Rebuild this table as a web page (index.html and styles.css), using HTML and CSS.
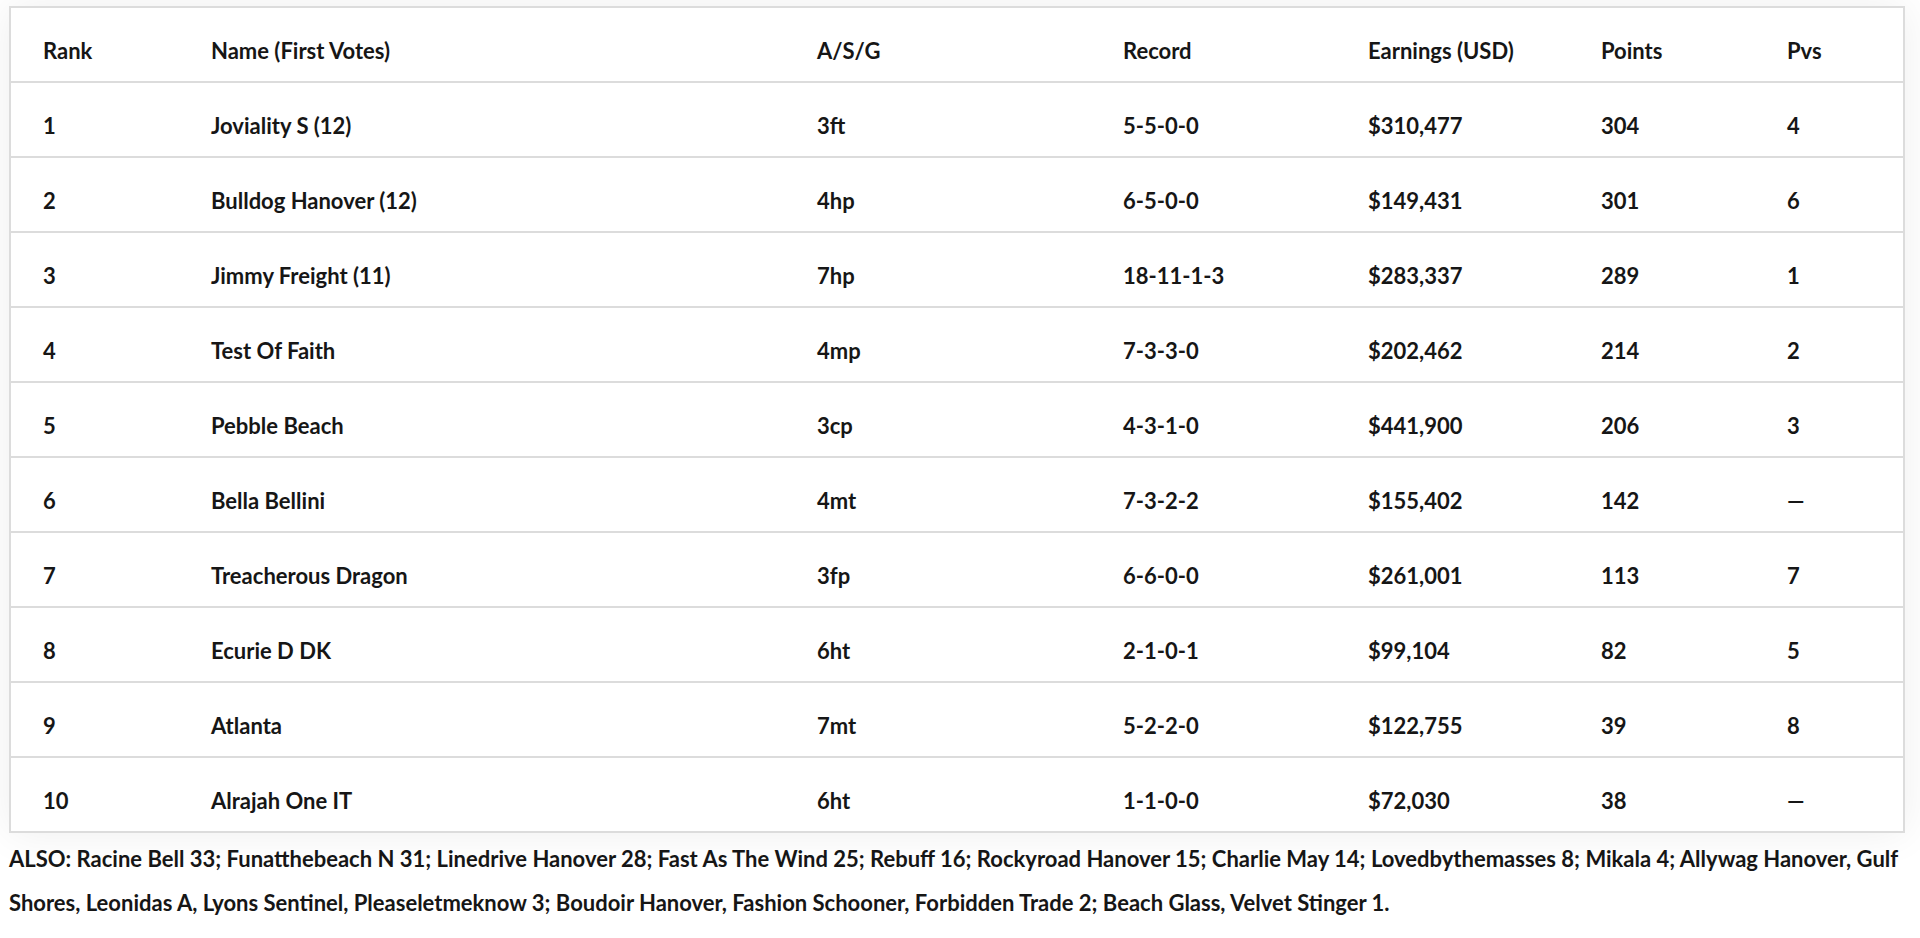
FILE: index.html
```html
<!DOCTYPE html>
<html lang="en">
<head>
<meta charset="utf-8">
<title>Poll</title>
<link rel="stylesheet" href="styles.css">
</head>
<body>
<div class="page">
  <table class="poll">
    <colgroup>
      <col class="c-rank"><col class="c-name"><col class="c-asg"><col class="c-rec"><col class="c-earn"><col class="c-pts"><col class="c-pvs">
    </colgroup>
    <thead>
      <tr><th>Rank</th><th>Name (First Votes)</th><th>A/S/G</th><th>Record</th><th>Earnings (USD)</th><th>Points</th><th>Pvs</th></tr>
    </thead>
    <tbody>
      <tr><td>1</td><td>Joviality S (12)</td><td>3ft</td><td>5-5-0-0</td><td>$310,477</td><td>304</td><td>4</td></tr>
      <tr><td>2</td><td>Bulldog Hanover (12)</td><td>4hp</td><td>6-5-0-0</td><td>$149,431</td><td>301</td><td>6</td></tr>
      <tr><td>3</td><td>Jimmy Freight (11)</td><td>7hp</td><td>18-11-1-3</td><td>$283,337</td><td>289</td><td>1</td></tr>
      <tr><td>4</td><td>Test Of Faith</td><td>4mp</td><td>7-3-3-0</td><td>$202,462</td><td>214</td><td>2</td></tr>
      <tr><td>5</td><td>Pebble Beach</td><td>3cp</td><td>4-3-1-0</td><td>$441,900</td><td>206</td><td>3</td></tr>
      <tr><td>6</td><td>Bella Bellini</td><td>4mt</td><td>7-3-2-2</td><td>$155,402</td><td>142</td><td>—</td></tr>
      <tr><td>7</td><td>Treacherous Dragon</td><td>3fp</td><td>6-6-0-0</td><td>$261,001</td><td>113</td><td>7</td></tr>
      <tr><td>8</td><td>Ecurie D DK</td><td>6ht</td><td>2-1-0-1</td><td>$99,104</td><td>82</td><td>5</td></tr>
      <tr><td>9</td><td>Atlanta</td><td>7mt</td><td>5-2-2-0</td><td>$122,755</td><td>39</td><td>8</td></tr>
      <tr><td>10</td><td>Alrajah One IT</td><td>6ht</td><td>1-1-0-0</td><td>$72,030</td><td>38</td><td>—</td></tr>
    </tbody>
  </table>
  <p class="also">ALSO: Racine Bell 33; Funatthebeach N 31; Linedrive Hanover 28; Fast As The Wind 25; Rebuff 16; Rockyroad Hanover 15; Charlie May 14; Lovedbythemasses 8; Mikala 4; Allywag Hanover, Gulf Shores, Leonidas A, Lyons Sentinel, Pleaseletmeknow 3; Boudoir Hanover, Fashion Schooner, Forbidden Trade 2; Beach Glass, Velvet Stinger 1.</p>
</div>
</body>
</html>
```

FILE: styles.css
```css
html, body {
  margin: 0;
  background: #ffffff;
}

body {
  font-family: Lato, "Open Sans", Arial, sans-serif;
  font-weight: 700;
  font-size: 22px;
  color: #161616;
}

.page {
  padding: 6px 15px 0 9px;
}

.poll {
  width: 100%;
  table-layout: fixed;
  border-collapse: collapse;
  border: 2px solid #dcdcdc;
  box-shadow: 0 0 40px rgba(0, 0, 0, 0.07);
  background: #fff;
}

.c-rank { width: 169px; }
.c-name { width: 606px; }
.c-asg { width: 306px; }
.c-rec { width: 245px; }
.c-earn { width: 233px; }
.c-pts { width: 186px; }
.c-pvs { width: auto; }

.poll th,
.poll td {
  text-align: left;
  font-weight: 700;
  height: 75px;
  padding: 11px 0 0 32px;
  box-sizing: border-box;
  vertical-align: middle;
  border-bottom: 2px solid #dcdcdc;
}

.also {
  margin: 0;
  padding: 4px 0 0 0;
  line-height: 44px;
}
```
